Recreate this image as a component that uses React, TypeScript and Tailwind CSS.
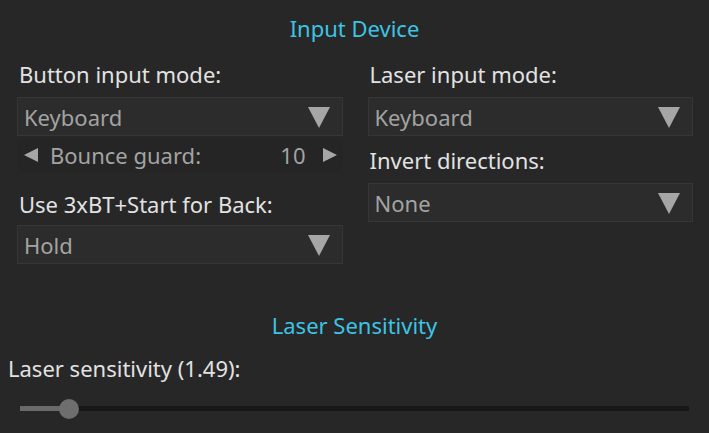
import React from 'react';

const font = { fontFamily: '"Noto Sans", "Open Sans", sans-serif' };

const Caret = () => (
    <svg width="22" height="22" viewBox="0 0 22 22" className="shrink-0">
        <polygon points="0,1 22,1 11,22" fill="#a6a6a6" />
    </svg>
);

const Dropdown = ({ value }: { value: string }) => (
    <div className="flex h-[39px] items-center justify-between border border-[#363636] bg-[#2c2c2c] pl-[6px] pr-[12px]">
        <span className="text-[22px] leading-[28px] text-[#a3a3a3]">{value}</span>
        <Caret />
    </div>
);

const Label = ({ children }: { children: React.ReactNode }) => (
    <div className="mt-[10px] mb-[9px] h-[28px] pl-[2px] text-[22px] leading-[28px] text-[#e2e2e2]">{children}</div>
);

export default function App() {
    return (
        <div className="h-[433px] w-[709px] overflow-hidden bg-[#272727]" style={font}>
            <div className="flex h-[50px] items-start justify-center pt-[14px] text-[22px] leading-[28px] text-[#3cc4e4]">
                Input Device
            </div>

            <div className="grid grid-cols-2 gap-x-[25px] pl-[17px] pr-[16px]">
                <div className="flex flex-col">
                    <Label>Button input mode:</Label>
                    <Dropdown value="Keyboard" />
                    <div className="mt-[1px] flex h-[36px] items-center rounded-[8px] bg-[#252525] pl-[7px] pr-[6px] text-[22px] leading-[28px] text-[#a3a3a3]">
                        <svg width="14" height="14" viewBox="0 0 14 14"><polygon points="14,0 14,14 0,7" fill="#a6a6a6" /></svg>
                        <span className="ml-[12px] flex-1">Bounce guard:</span>
                        <span>10</span>
                        <svg width="14" height="14" viewBox="0 0 14 14" className="ml-[17px]"><polygon points="0,0 0,14 14,7" fill="#a6a6a6" /></svg>
                    </div>
                    <div className="mt-[17px] mb-[7px] h-[28px] pl-[2px] text-[22px] leading-[28px] text-[#e2e2e2]">Use 3xBT+Start for Back:</div>
                    <Dropdown value="Hold" />
                </div>
                <div className="flex flex-col">
                    <Label>Laser input mode:</Label>
                    <Dropdown value="Keyboard" />
                    <Label>Invert directions:</Label>
                    <Dropdown value="None" />
                </div>
            </div>

            <div className="mt-[47px] flex justify-center text-[22px] leading-[28px] text-[#3cc4e4]">Laser Sensitivity</div>

            <div className="mt-[15px] pl-[8px] text-[22px] leading-[28px] text-[#e2e2e2]">Laser sensitivity (1.49):</div>

            <div className="relative mx-[20px] mt-[17px] h-[20px]">
                <div className="absolute left-0 right-0 top-[7px] flex h-[5px]">
                    <div className="w-[49px] bg-[#6a6a6a]" />
                    <div className="flex-1 bg-[#171717]" />
                </div>
                <div className="absolute left-[39px] top-0 h-[20px] w-[20px] rounded-full bg-[#6e6e6e]" />
            </div>
        </div>
    );
}
